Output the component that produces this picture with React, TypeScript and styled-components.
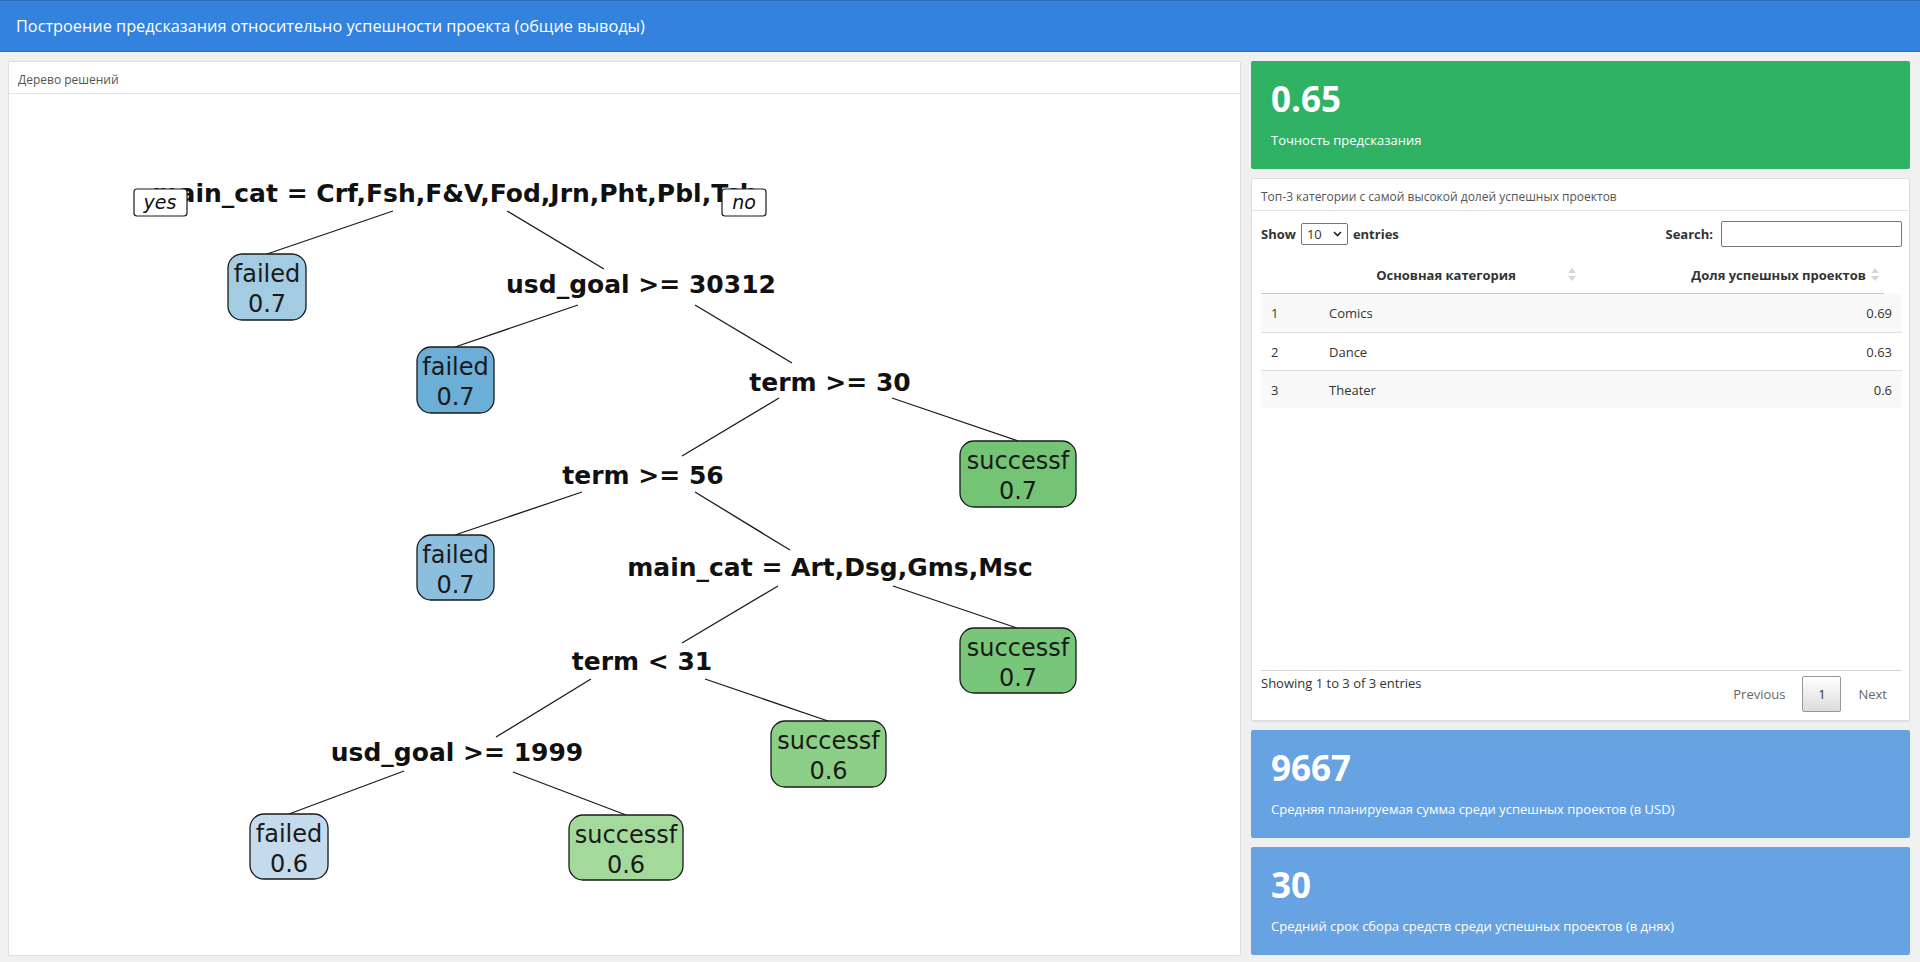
import React from 'react'
import styled, { createGlobalStyle } from 'styled-components'

const GlobalStyle = createGlobalStyle`
  html, body {
    margin: 0;
    padding: 0;
    background: #f0f0f0;
    font-family: "Source Sans Pro", "Open Sans", "Noto Sans", sans-serif;
    color: #333;
  }
  * {
    box-sizing: border-box;
  }
`

interface Split {
  x: number
  y: number
  label: string
}

interface Leaf {
  x1: number
  x2: number
  y1: number
  y2: number
  cls: string
  prob: string
  fill: string
}

interface Row {
  n: number
  category: string
  share: string
}

// узлы разбиения (координаты страницы)
const splits: Split[] = [
  { x: 455, y: 193, label: 'main_cat = Crf,Fsh,F&V,Fod,Jrn,Pht,Pbl,Tch' },
  { x: 641, y: 284, label: 'usd_goal >= 30312' },
  { x: 830, y: 382, label: 'term >= 30' },
  { x: 643, y: 475, label: 'term >= 56' },
  { x: 830, y: 567, label: 'main_cat = Art,Dsg,Gms,Msc' },
  { x: 642, y: 661, label: 'term < 31' },
  { x: 457, y: 752, label: 'usd_goal >= 1999' },
]

const leaves: Leaf[] = [
  { x1: 228, x2: 306, y1: 254, y2: 320, cls: 'failed', prob: '0.7', fill: '#a3cce3' },
  { x1: 417, x2: 494, y1: 347, y2: 413, cls: 'failed', prob: '0.7', fill: '#6baed6' },
  { x1: 960, x2: 1076, y1: 441, y2: 507, cls: 'successf', prob: '0.7', fill: '#74c476' },
  { x1: 417, x2: 494, y1: 535, y2: 600, cls: 'failed', prob: '0.7', fill: '#8cbfde' },
  { x1: 960, x2: 1076, y1: 628, y2: 693, cls: 'successf', prob: '0.7', fill: '#78c679' },
  { x1: 771, x2: 886, y1: 721, y2: 787, cls: 'successf', prob: '0.6', fill: '#8ccf86' },
  { x1: 250, x2: 328, y1: 814, y2: 879, cls: 'failed', prob: '0.6', fill: '#c4dbee' },
  { x1: 569, x2: 683, y1: 815, y2: 880, cls: 'successf', prob: '0.6', fill: '#a3da9c' },
]

const edges: [number, number, number, number][] = [
  [393, 211, 267, 254],
  [507, 211, 604, 269],
  [578, 305, 455, 347],
  [695, 305, 792, 363],
  [779, 398, 682, 456],
  [892, 398, 1018, 441],
  [582, 492, 455, 535],
  [695, 492, 790, 550],
  [778, 586, 682, 643],
  [893, 586, 1017, 628],
  [591, 679, 496, 737],
  [705, 679, 828, 721],
  [404, 771, 289, 814],
  [513, 772, 626, 815],
]

const rows: Row[] = [
  { n: 1, category: 'Comics', share: '0.69' },
  { n: 2, category: 'Dance', share: '0.63' },
  { n: 3, category: 'Theater', share: '0.6' },
]

export default function App() {
  return (
    <>
      <GlobalStyle />
      <TopBar>Построение предсказания относительно успешности проекта (общие выводы)</TopBar>
      <Content>
        <TreeBox>
          <BoxTitle>Дерево решений</BoxTitle>
          <DecisionTree />
        </TreeBox>
        <SideColumn>
          <ValueBox $bg="#2fb263">
            <ValueNumber>0.65</ValueNumber>
            <ValueCaption>Точность предсказания</ValueCaption>
          </ValueBox>
          <TableBox>
            <BoxTitle>Топ-3 категории с самой высокой долей успешных проектов</BoxTitle>
            <TopCategories />
          </TableBox>
          <ValueBox $bg="#67a2e3">
            <ValueNumber>9667</ValueNumber>
            <ValueCaption>Средняя планируемая сумма среди успешных проектов (в USD)</ValueCaption>
          </ValueBox>
          <ValueBox $bg="#67a2e3">
            <ValueNumber>30</ValueNumber>
            <ValueCaption>Средний срок сбора средств среди успешных проектов (в днях)</ValueCaption>
          </ValueBox>
        </SideColumn>
      </Content>
    </>
  )
}

/**
 * дерево решений (rpart.plot)
 */
const DecisionTree = () => (
  <TreeSvg viewBox="9 94 1231 861">
    {edges.map(([x1, y1, x2, y2], i) => (
      <line key={i} x1={x1} y1={y1} x2={x2} y2={y2} stroke="#1a1a1a" strokeWidth={1.3} />
    ))}
    {splits.map((s) => (
      <SplitText key={s.label} x={s.x} y={s.y + 9} textAnchor="middle">
        {s.label}
      </SplitText>
    ))}
    {leaves.map((l, i) => {
      const cx = (l.x1 + l.x2) / 2
      return (
        <g key={i}>
          <rect
            x={l.x1}
            y={l.y1}
            width={l.x2 - l.x1}
            height={l.y2 - l.y1}
            rx={14}
            fill={l.fill}
            stroke="#1a1a1a"
            strokeWidth={1.3}
          />
          <LeafText x={cx} y={l.y1 + 28} textAnchor="middle">
            {l.cls}
          </LeafText>
          <LeafText x={cx} y={l.y1 + 58} textAnchor="middle">
            {l.prob}
          </LeafText>
        </g>
      )
    })}
    <rect x={134} y={189} width={53} height={27} rx={3} fill="#fff" stroke="#1a1a1a" strokeWidth={1.2} />
    <TagText x={160} y={209} textAnchor="middle">yes</TagText>
    <rect x={722} y={189} width={44} height={27} rx={3} fill="#fff" stroke="#1a1a1a" strokeWidth={1.2} />
    <TagText x={744} y={209} textAnchor="middle">no</TagText>
  </TreeSvg>
)

const SortIcon = () => (
  <svg width="8" height="13" viewBox="0 0 8 13">
    <path d="M4 0 L8 5 L0 5 Z" fill="#d6d6d6" />
    <path d="M0 8 L8 8 L4 13 Z" fill="#d6d6d6" />
  </svg>
)

/**
 * таблица топ-3 категорий
 */
const TopCategories = () => (
  <TableBody>
    <Controls>
      <ControlLabel>
        Show
        <PageSelect>
          10
          <svg width="9" height="6" viewBox="0 0 9 6">
            <path d="M1 1 L4.5 4.5 L8 1" fill="none" stroke="#222" strokeWidth="1.6" />
          </svg>
        </PageSelect>
        entries
      </ControlLabel>
      <ControlLabel>
        Search:
        <SearchInput />
      </ControlLabel>
    </Controls>
    <HeadRow>
      <HeadCell $align="left" />
      <HeadCell $align="center">
        Основная категория
        <SortSlot>
          <SortIcon />
        </SortSlot>
      </HeadCell>
      <HeadCell $align="right">
        Доля успешных проектов
        <SortSlot>
          <SortIcon />
        </SortSlot>
      </HeadCell>
    </HeadRow>
    <ScrollBody>
      {rows.map((r) => (
        <DataRow key={r.n} $odd={r.n % 2 === 1}>
          <Cell $align="left">{r.n}</Cell>
          <Cell $align="left">{r.category}</Cell>
          <Cell $align="right">{r.share}</Cell>
        </DataRow>
      ))}
    </ScrollBody>
    <Footer>
      <Info>Showing 1 to 3 of 3 entries</Info>
      <Pager>
        <PageLink>Previous</PageLink>
        <PageButton>1</PageButton>
        <PageLink>Next</PageLink>
      </Pager>
    </Footer>
  </TableBody>
)

const TopBar = styled.header`
  height: 52px;
  display: flex;
  align-items: center;
  padding: 0 16px;
  background: #3282de;
  border-top: 1px solid #2c6fbd;
  border-bottom: 1px solid #2a6cbc;
  color: #fff;
  font-size: 16.3px;
`

const Content = styled.main`
  display: grid;
  grid-template-columns: 1233px 659px;
  gap: 10px;
  padding: 9px 10px 0 8px;
`

const Panel = styled.section`
  background: #fff;
  border: 1px solid #dedede;
  border-radius: 2px;
  box-shadow: 0 1px 1px rgba(0, 0, 0, 0.06);
  display: flex;
  flex-direction: column;
`

const TreeBox = styled(Panel)`
  height: 895px;
`

const BoxTitle = styled.div`
  height: 32px;
  flex-shrink: 0;
  display: flex;
  align-items: center;
  padding: 3px 9px 0;
  border-bottom: 1px solid #e4e4e4;
  font-size: 12px;
  color: #555;
`

const TreeSvg = styled.svg`
  display: block;
  width: 1231px;
  height: 861px;
`

const SplitText = styled.text`
  font-family: "DejaVu Sans", sans-serif;
  font-weight: bold;
  font-size: 25px;
  fill: #111;
`

const LeafText = styled.text`
  font-family: "DejaVu Sans", sans-serif;
  font-size: 24px;
  fill: #1a1a1a;
`

const TagText = styled.text`
  font-family: "DejaVu Sans", sans-serif;
  font-style: italic;
  font-size: 19px;
  fill: #111;
`

const SideColumn = styled.div`
  display: flex;
  flex-direction: column;
  gap: 9px;
`

const ValueBox = styled.div<{ $bg: string }>`
  height: 108px;
  padding: 16px 20px 0;
  background: ${(p) => p.$bg};
  border-radius: 2px;
  color: #fff;
`

const ValueNumber = styled.div`
  font-size: 35px;
  font-weight: 700;
  line-height: 44px;
`

const ValueCaption = styled.div`
  margin-top: 10px;
  font-size: 13px;
  line-height: 18px;
`

const TableBox = styled(Panel)`
  height: 543px;
`

const TableBody = styled.div`
  padding: 10px 7px 0 9px;
  display: flex;
  flex-direction: column;
`

const Controls = styled.div`
  display: flex;
  justify-content: space-between;
  align-items: center;
  height: 26px;
`

const ControlLabel = styled.label`
  display: flex;
  align-items: center;
  gap: 5px;
  font-size: 13px;
  font-weight: 700;
  color: #333;
`

const PageSelect = styled.span`
  width: 47px;
  height: 22px;
  display: flex;
  align-items: center;
  justify-content: space-between;
  padding: 0 5px;
  border: 1px solid #767676;
  border-radius: 2px;
  font-weight: 400;
  font-size: 13px;
`

const SearchInput = styled.span`
  width: 181px;
  height: 26px;
  border: 1px solid #767676;
  border-radius: 2px;
  margin-left: 3px;
`

const HeadRow = styled.div`
  margin-top: 9px;
  margin-right: 18px;
  height: 38px;
  display: grid;
  grid-template-columns: 58px 262px 1fr;
  border-bottom: 1px solid #c8c8c8;
  font-size: 13px;
  font-weight: 700;
`

const HeadCell = styled.div<{ $align: 'left' | 'center' | 'right' }>`
  position: relative;
  display: flex;
  align-items: center;
  justify-content: ${(p) => (p.$align === 'center' ? 'center' : p.$align === 'right' ? 'flex-end' : 'flex-start')};
  padding: 0 18px 0 10px;
`

const SortSlot = styled.span`
  position: absolute;
  right: 5px;
  top: 12px;
  display: flex;
`

const ScrollBody = styled.div`
  height: 377px;
  border-bottom: 1px solid #d4d4d4;
`

const DataRow = styled.div<{ $odd: boolean }>`
  height: 38px;
  display: grid;
  grid-template-columns: 58px 262px 1fr;
  align-items: center;
  background: ${(p) => (p.$odd ? '#f9f9f9' : '#fff')};
  border-top: 1px solid #e0e0e0;
  font-size: 13px;
  color: #333;

  &:first-child {
    border-top: none;
  }
`

const Cell = styled.div<{ $align: 'left' | 'right' }>`
  padding: 0 10px;
  text-align: ${(p) => p.$align};
`

const Footer = styled.div`
  display: flex;
  justify-content: space-between;
  align-items: flex-start;
  padding-top: 5px;
`

const Info = styled.div`
  font-size: 13px;
  color: #333;
  line-height: 14px;
`

const Pager = styled.div`
  display: flex;
  align-items: center;
  font-size: 13px;
`

const PageLink = styled.span`
  padding: 0 17px;
  color: #666;

  &:last-child {
    padding-right: 15px;
  }
`

const PageButton = styled.span`
  width: 39px;
  height: 36px;
  display: flex;
  align-items: center;
  justify-content: center;
  border: 1px solid #979797;
  border-radius: 2px;
  background: linear-gradient(to bottom, #ffffff 0%, #dcdcdc 100%);
  color: #333;
`
